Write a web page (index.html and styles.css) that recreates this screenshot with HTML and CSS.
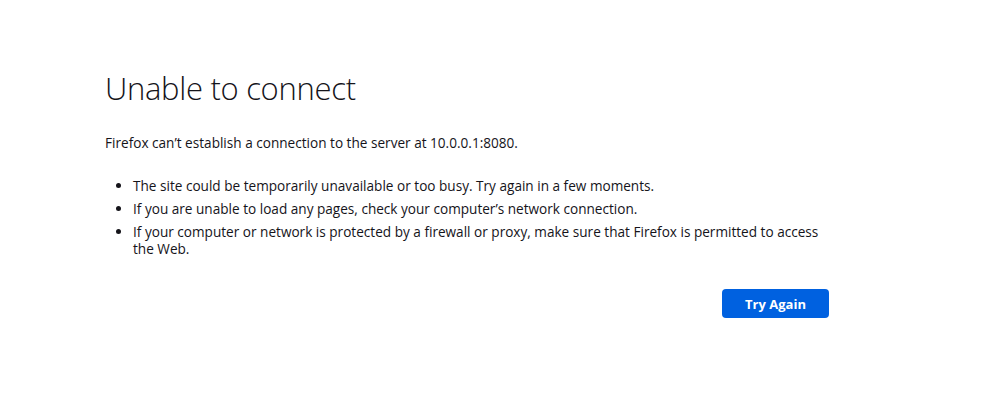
FILE: index.html
```html
<!DOCTYPE html>
<html lang="en">
<head>
<meta charset="utf-8">
<title>Problem loading page</title>
<link rel="stylesheet" href="styles.css">
</head>
<body>
<main class="container">
  <h1 class="title">Unable to connect</h1>
  <p class="desc">Firefox can’t establish a connection to the server at 10.0.0.1:8080.</p>
  <ul class="list">
    <li>The site could be temporarily unavailable or too busy. Try again in a few moments.</li>
    <li>If you are unable to load any pages, check your computer’s network connection.</li>
    <li>If your computer or network is protected by a firewall or proxy, make sure that Firefox is permitted to access the Web.</li>
  </ul>
  <div class="actions">
    <button class="btn">Try Again</button>
  </div>
</main>
</body>
</html>
```
FILE: styles.css
```css
html, body {
  margin: 0;
  padding: 0;
  background: #ffffff;
}
body {
  font-family: "Open Sans", "Noto Sans", sans-serif;
  color: #15141a;
  font-size: 13.6px;
}
.container {
  width: 724px;
  margin-left: 105px;
  padding-top: 64px;
}
.title {
  font-size: 31px;
  font-weight: 300;
  margin: 0;
  line-height: 48px;
  letter-spacing: -0.3px;
}
.desc {
  margin: 21px 0 0;
  line-height: 20px;
}
.list {
  margin: 24px 0 0;
  padding-left: 28px;
}
.list li {
  line-height: 17px;
  margin-bottom: 6px;
}
.actions {
  display: flex;
  justify-content: flex-end;
  margin-top: 32px;
}
.btn {
  width: 107px;
  height: 29px;
  border: none;
  border-radius: 4px;
  background: #0061e0;
  color: #fff;
  font-family: "Open Sans", "Noto Sans", sans-serif;
  font-weight: 700;
  font-size: 13px;
  padding: 0;
}
```
